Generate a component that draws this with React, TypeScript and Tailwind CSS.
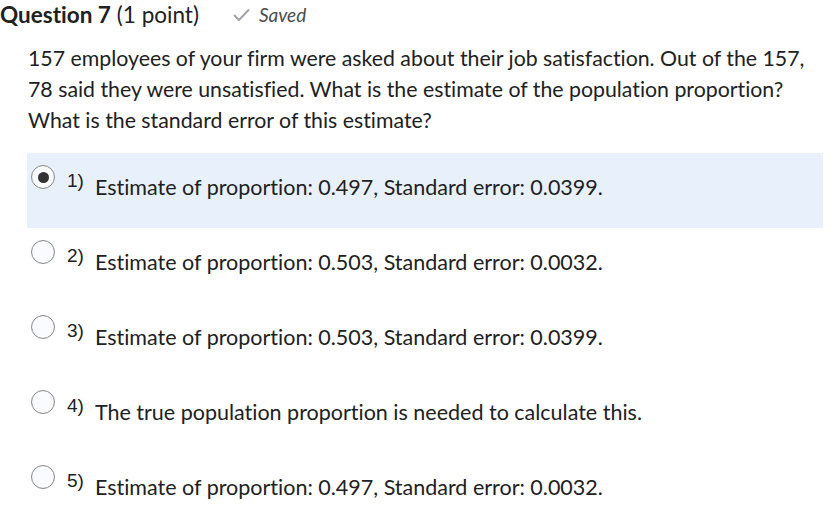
import React from 'react';

const options = [
  { n: '1)', text: 'Estimate of proportion: 0.497, Standard error: 0.0399.', checked: true },
  { n: '2)', text: 'Estimate of proportion: 0.503, Standard error: 0.0032.', checked: false },
  { n: '3)', text: 'Estimate of proportion: 0.503, Standard error: 0.0399.', checked: false },
  { n: '4)', text: 'The true population proportion is needed to calculate this.', checked: false },
  { n: '5)', text: 'Estimate of proportion: 0.497, Standard error: 0.0032.', checked: false },
];

function Radio({ checked }: { checked: boolean }) {
  return (
    <span className="flex h-[24px] w-[24px] shrink-0 items-center justify-center rounded-full border border-[#8a8a8a] bg-[#f9fbff] shadow-[inset_0_0_1px_rgba(0,0,0,0.2)]">
      {checked && <span className="h-[11px] w-[11px] rounded-full bg-[#333]" />}
    </span>
  );
}

export default function App() {
  return (
    <div className="min-h-[524px] w-[833px] bg-white font-['Lato',sans-serif] text-[#202122] [font-variant-ligatures:none]">
      {/* Header */}
      <div className="flex items-center pt-[3px] text-[22.5px] leading-[24px]">
        <span className="font-bold">Question 7</span>
        <span className="ml-[6px]">(1 point)</span>
        <span className="ml-[34px] flex items-center gap-[9px] text-[19px] italic text-[#494c4e]">
          <svg width="17" height="14" viewBox="0 0 17 14" fill="none">
            <path d="M1.5 7.5L6 12L15.5 2" stroke="#a2a6aa" strokeWidth="2" strokeLinecap="round" strokeLinejoin="round" />
          </svg>
          Saved
        </span>
      </div>

      {/* Question text */}
      <p className="mt-[16px] px-[28px] text-[21.3px] leading-[31px]">
        157 employees of your firm were asked about their job satisfaction. Out of the 157, 78 said they were unsatisfied. What is the estimate of the population proportion? What is the standard error of this estimate?
      </p>

      {/* Options */}
      <div className="mt-[17px] pl-[27px] pr-[10px]">
        {options.map((o) => (
          <div
            key={o.n}
            className={`flex h-[75px] items-start pl-[4px] pt-[12px] ${o.checked ? 'bg-[#e8f1fb]' : ''}`}
          >
            <Radio checked={o.checked} />
            <span className="ml-[12px] mt-[5px] font-['Liberation_Sans',Arial,sans-serif] text-[19px] leading-[22px]">{o.n}</span>
            <span className="ml-[11px] mt-[10px] text-[21.5px] leading-[24px]">{o.text}</span>
          </div>
        ))}
      </div>
    </div>
  );
}
